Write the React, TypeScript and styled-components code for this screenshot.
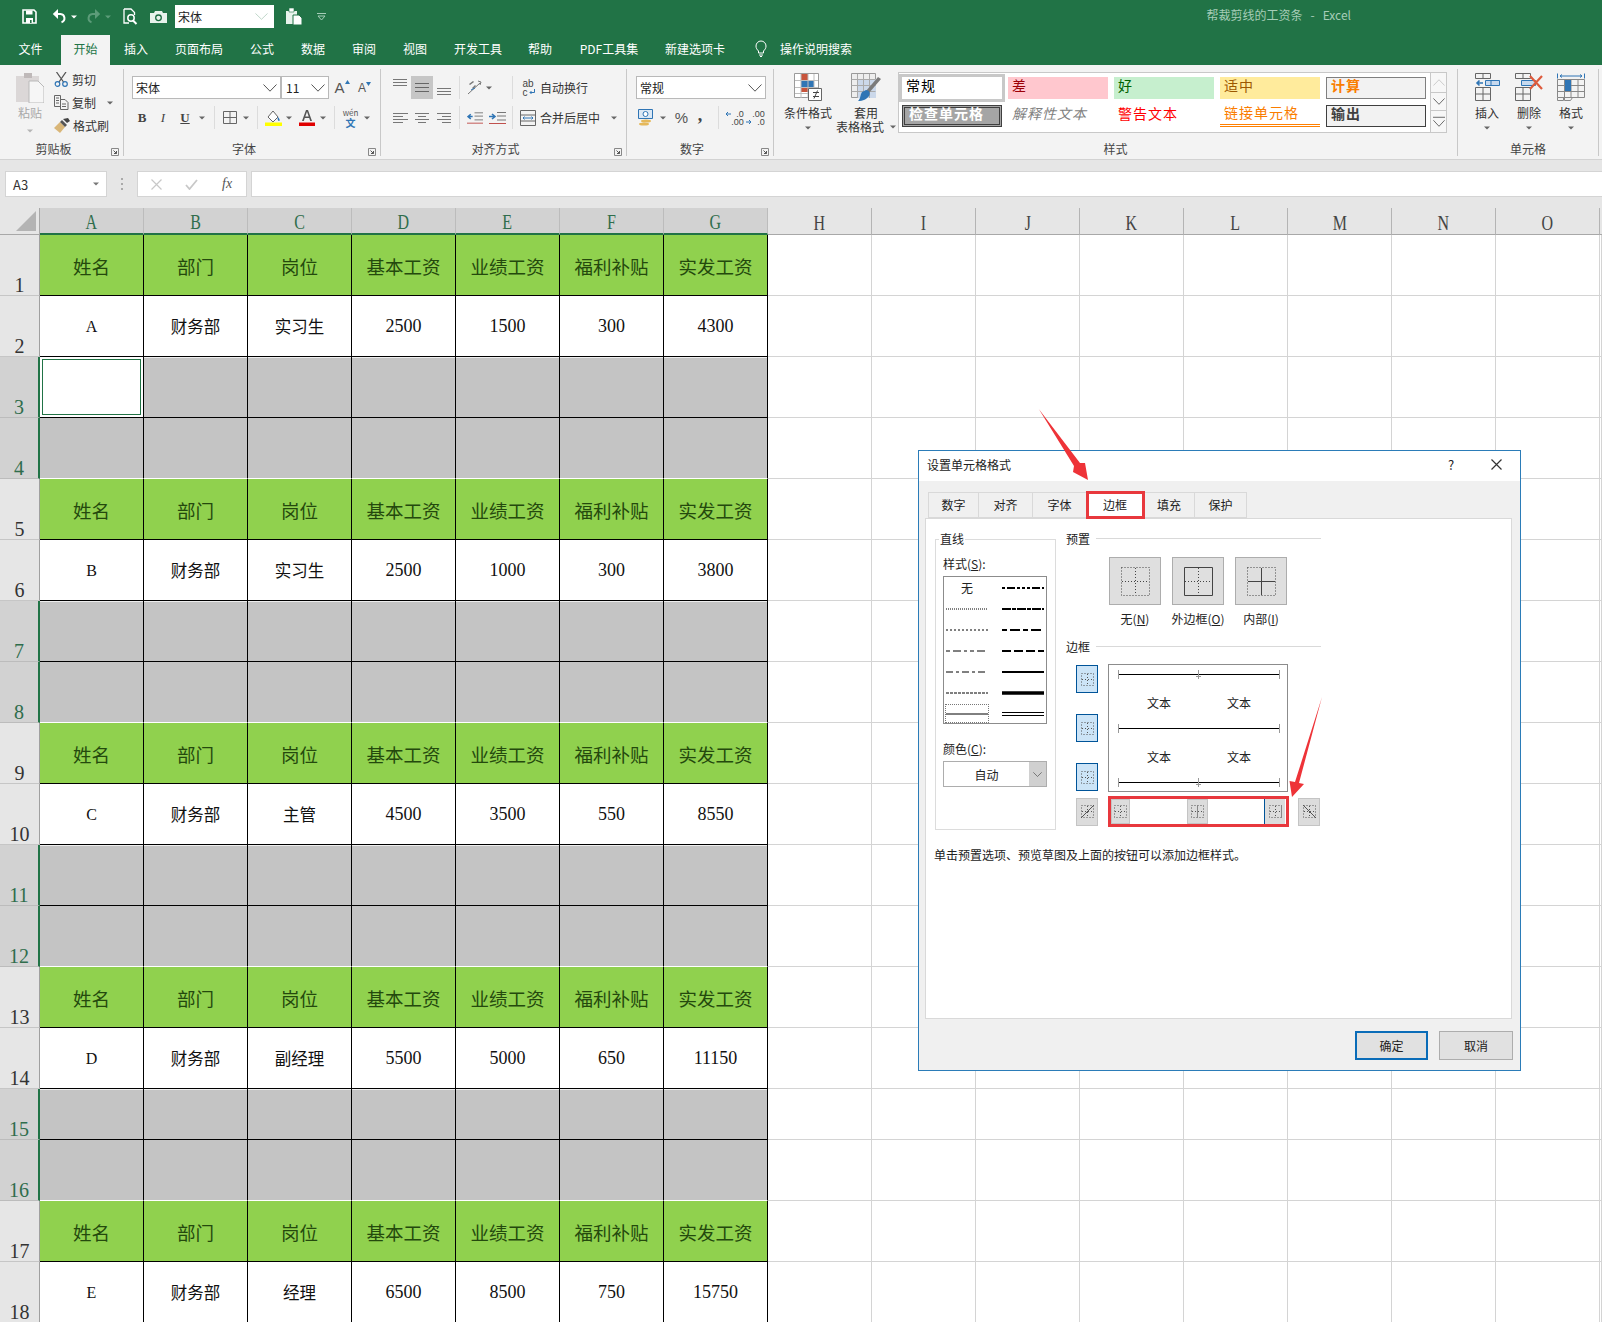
import React from "react";
import styled, { createGlobalStyle } from "styled-components";

const UI = `"Noto Sans CJK SC", "Liberation Sans", sans-serif`;
const GREEN = "#217346";

const Global = createGlobalStyle`
  html, body { margin: 0; padding: 0; background: #fff; }
  #root { width: 1602px; height: 1322px; overflow: hidden; }
  * { box-sizing: border-box; }
`;

const Page = styled.div`
  position: relative;
  width: 1602px;
  height: 1322px;
  overflow: hidden;
  display: flex;
  flex-direction: column;
  font-family: ${UI};
  font-size: 12px;
  color: #333;
`;

/* ---------- title bar ---------- */
const TitleBar = styled.header`
  height: 65px;
  flex: none;
  background: ${GREEN};
  color: #fff;
`;
const QuickRow = styled.div`
  height: 35px;
  display: flex;
  align-items: flex-start;
  padding-top: 5px;
`;
const Tool = styled.span<{ $w: number; $ml?: number }>`
  display: inline-flex;
  align-items: center;
  justify-content: center;
  flex: none;
  width: ${(p) => p.$w}px;
  margin-left: ${(p) => p.$ml ?? 0}px;
`;
const QuickSlot = styled(Tool)`
  height: 23px;
`;
const QuickFont = styled.div`
  width: 99px;
  height: 23px;
  margin-left: 8px;
  flex: none;
  display: flex;
  align-items: center;
  justify-content: space-between;
  padding: 0 6px 0 3px;
  background: #fff;
  color: #222;
`;
const DocTitle = styled.div`
  margin-left: auto;
  margin-right: 251px;
  height: 20px;
  line-height: 20px;
  color: #a6cdb8;
  white-space: pre;
`;
const TabRow = styled.nav`
  height: 30px;
  display: flex;
  align-items: stretch;
`;
const TabItem = styled.div<{ $w: number; $active?: boolean }>`
  width: ${(p) => p.$w}px;
  flex: none;
  display: flex;
  align-items: center;
  justify-content: center;
  padding-bottom: 3px;
  background: ${(p) => (p.$active ? "#f3f3f3" : "transparent")};
  color: ${(p) => (p.$active ? GREEN : "#fff")};
  white-space: nowrap;
`;
const SearchHint = styled.div`
  display: flex;
  align-items: center;
  margin-left: 19px;
  padding-bottom: 3px;
  gap: 13px;
  color: #fff;
`;

/* ---------- ribbon ---------- */
const Ribbon = styled.section`
  height: 95px;
  flex: none;
  display: flex;
  padding-top: 4px;
  background: #f3f3f3;
  border-bottom: 1px solid #d2d2d2;
`;
const Group = styled.div<{ $w: number }>`
  width: ${(p) => p.$w}px;
  height: 87px;
  flex: none;
  display: flex;
  flex-direction: column;
  border-right: 1px solid #c8c8c8;
`;
const GroupBody = styled.div`
  height: 73px;
  display: flex;
`;
const RowsBody = styled.div`
  height: 73px;
  padding-top: 7px;
  display: flex;
  flex-direction: column;
  gap: 7px;
`;
const GroupFooter = styled.div`
  height: 14px;
  display: flex;
  align-items: center;
  color: #444;
`;
const GroupName = styled.div`
  flex: 1;
  text-align: center;
  line-height: 14px;
`;
const Launcher = styled.span`
  width: 16px;
  flex: none;
  display: flex;
  justify-content: center;
  padding-top: 5px;
`;
const ToolRow = styled.div`
  height: 23px;
  display: flex;
  align-items: center;
  white-space: nowrap;
`;
const Sep = styled.span<{ $ml: number }>`
  width: 1px;
  height: 23px;
  flex: none;
  margin-left: ${(p) => p.$ml}px;
  background: #dcdcdc;
`;
const Combo = styled.div<{ $w: number; $ml?: number; $pad?: number }>`
  width: ${(p) => p.$w}px;
  margin-left: ${(p) => p.$ml ?? 0}px;
  height: 23px;
  flex: none;
  display: flex;
  align-items: center;
  justify-content: space-between;
  padding: 0 3px 0 ${(p) => p.$pad ?? 3}px;
  background: #fff;
  border: 1px solid #b9b9b9;
  color: #222;
`;
const Highlight = styled(Tool)`
  height: 23px;
  background: #c6c6c6;
`;
const ToolText = styled.span<{ $ml?: number }>`
  margin-left: ${(p) => p.$ml ?? 0}px;
  color: #333;
`;
const PasteCol = styled.div`
  flex: none;
  padding: 4px 0 0 6px;
  display: flex;
  flex-direction: column;
  align-items: center;
  width: 54px;
  color: #a9a9a9;
`;
const PasteLabel = styled.div`
  height: 20px;
  line-height: 20px;
`;
const SmallCol = styled.div`
  margin-top: -1px;
  display: flex;
  flex-direction: column;
`;
const SmallItem = styled.div`
  height: 23px;
  display: flex;
  align-items: center;
  gap: 3px;
`;
const LargeCol = styled.div<{ $w: number; $ml?: number }>`
  width: ${(p) => p.$w}px;
  margin-left: ${(p) => p.$ml ?? 0}px;
  flex: none;
  padding-top: 4px;
  display: flex;
  flex-direction: column;
  align-items: center;
  white-space: nowrap;
`;
const LargeIcon = styled.div`
  height: 31px;
  display: flex;
  align-items: flex-start;
`;
const LargeLabel = styled.div`
  height: 14px;
  line-height: 14px;
  margin-top: 2px;
  display: flex;
  align-items: center;
  gap: 6px;
`;
const SecondLabel = styled(LargeLabel)`
  margin-top: 0;
`;
const LargeCaret = styled.div`
  height: 12px;
  margin-top: 2px;
  display: flex;
  align-items: center;
`;
const Gallery = styled.div`
  width: 549px;
  height: 61px;
  margin: 3px 0 0 2px;
  display: flex;
  flex: none;
  background: #fff;
  border: 1px solid #c8c8c8;
`;
const GalleryGrid = styled.div`
  flex: 1;
  padding: 4px 0 0 3px;
  display: grid;
  grid-template-columns: repeat(5, 100px);
  grid-auto-rows: 22px;
  column-gap: 6px;
  row-gap: 6px;
`;
type Kind =
  | "normal" | "bad" | "good" | "neutral" | "calc"
  | "check" | "note" | "warn" | "link" | "output";
const kinds: Record<Kind, string> = {
  normal: "background:#fff;color:#000;box-shadow:0 0 0 3px #c8c8c8;",
  bad: "background:#ffc7ce;color:#9c0006;",
  good: "background:#c6efce;color:#006100;",
  neutral: "background:#ffeb9c;color:#9c5700;",
  calc: "background:#f2f2f2;color:#fa7d00;border:1px solid #7f7f7f;font-weight:700;",
  check: "background:#a5a5a5;color:#fff;border:3px double #3f3f3f;font-weight:700;",
  note: "color:#7f7f7f;font-style:italic;",
  warn: "color:#ff0000;",
  link: "color:#fa7d00;border-bottom:3px double #ff8001;",
  output: "background:#f2f2f2;color:#3f3f3f;border:1px solid #3f3f3f;font-weight:700;",
};
const StyleCell = styled.div<{ $k: Kind }>`
  display: flex;
  align-items: center;
  padding: 0 0 6px 4px;
  font-size: 14px;
  letter-spacing: 1px;
  line-height: 16px;
  white-space: nowrap;
  ${(p) => kinds[p.$k]}
`;
const GalleryScroll = styled.div`
  width: 16px;
  flex: none;
  display: flex;
  flex-direction: column;
  border-left: 1px solid #c8c8c8;
  background: #f7f7f7;
`;
const ScrollBtn = styled.div<{ $h: number }>`
  height: ${(p) => p.$h}px;
  display: flex;
  align-items: center;
  justify-content: center;
  border-bottom: 1px solid #c8c8c8;
  &:last-child {
    border-bottom: none;
  }
`;

/* ---------- formula bar ---------- */
const FormulaBand = styled.section`
  height: 48px;
  flex: none;
  display: flex;
  padding: 11px 0 0 5px;
  background: #e6e6e6;
`;
const NameBox = styled.div`
  width: 102px;
  height: 26px;
  display: flex;
  align-items: center;
  justify-content: space-between;
  padding: 0 7px;
  background: #fff;
  border: 1px solid #d4d4d4;
  font-size: 13px;
  color: #333;
`;
const BandDots = styled.div`
  width: 30px;
  height: 26px;
  flex: none;
  display: flex;
  align-items: center;
  justify-content: center;
`;
const FxBox = styled.div`
  width: 110px;
  height: 26px;
  flex: none;
  display: flex;
  align-items: center;
  background: #fff;
  border: 1px solid #d4d4d4;
`;
const FxLabel = styled.span`
  margin-left: 24px;
  font-family: "Liberation Serif", serif;
  font-style: italic;
  font-size: 14px;
  color: #555;
`;
const FormulaInput = styled.div`
  flex: 1;
  height: 26px;
  margin-left: 4px;
  background: #fff;
  border: 1px solid #d4d4d4;
  border-right: none;
`;

/* ---------- sheet ---------- */
const Sheet = styled.section`
  flex: 1;
  display: grid;
  grid-template-columns: 40px repeat(15, 104px) 2px;
  grid-template-rows: 27px repeat(14, 61px) 51px repeat(3, 61px);
  background: #fff;
`;
const Corner = styled.div`
  background: #e6e6e6;
  border-bottom: 1px solid #a8a8a8;
  border-right: 1px solid #a8a8a8;
  display: flex;
  align-items: center;
  justify-content: flex-end;
  padding-right: 3px;
`;
const ColHead = styled.div<{ $sel: boolean }>`
  display: flex;
  align-items: center;
  justify-content: center;
  padding-top: 4px;
  font-family: "Liberation Serif", serif;
  font-size: 20px;
  background: ${(p) => (p.$sel ? "#d2d2d2" : "#e6e6e6")};
  color: ${(p) => (p.$sel ? "#2f6d4c" : "#444")};
  border-right: 1px solid ${(p) => (p.$sel ? "#bcbcbc" : "#b4b4b4")};
  border-bottom: ${(p) => (p.$sel ? `2px solid ${GREEN}` : "1px solid #a8a8a8")};
`;
const ColLetter = styled.span`
  display: inline-block;
  transform: scaleX(0.8);
`;
const RowHead = styled.div<{ $sel: boolean }>`
  display: flex;
  align-items: flex-end;
  justify-content: center;
  font-family: "Liberation Serif", serif;
  font-size: 20px;
  line-height: 19px;
  background: ${(p) => (p.$sel ? "#d2d2d2" : "#e6e6e6")};
  color: ${(p) => (p.$sel ? "#2f6d4c" : "#333")};
  border-right: ${(p) => (p.$sel ? `2px solid ${GREEN}` : "1px solid #a0a0a0")};
  border-bottom: 1px solid ${(p) => (p.$sel ? "#bcbcbc" : "#c6c6c6")};
`;
const Cell = styled.div`
  border-right: 1px solid #d4d4d4;
  border-bottom: 1px solid #d4d4d4;
`;
const TitleCell = styled.div`
  display: flex;
  align-items: center;
  justify-content: center;
  padding-top: 1px;
  background: #90d14e;
  color: #24490d;
  font-size: 18.5px;
  white-space: nowrap;
  border-right: 1px solid #000;
  border-bottom: 1px solid #000;
`;
const DataCell = styled.div`
  display: flex;
  align-items: center;
  justify-content: center;
  padding-top: 1px;
  background: #fff;
  color: #111;
  font-family: "Liberation Serif", "Noto Sans CJK SC", serif;
  font-size: 18px;
  border-right: 1px solid #000;
  border-bottom: 1px solid #000;
`;
const CjkText = styled.span`
  font-family: ${UI};
  font-size: 16.5px;
  margin-top: -1px;
`;
const LetterText = styled.span`
  font-size: 16px;
`;
const BlankCell = styled.div<{ $first: boolean; $active?: boolean }>`
  background: ${(p) => (p.$active ? "#fff" : "#c4c4c4")};
  border-right: 1px solid #000;
  border-bottom: ${(p) => (p.$first ? "1px solid #000" : "1px solid #fff")};
  box-shadow: ${(p) =>
    p.$active
      ? `inset 0 0 0 2px #fff, inset 0 0 0 3px ${GREEN}`
      : p.$first
      ? "inset 0 1px 0 #eee"
      : "none"};
`;

/* ---------- dialog ---------- */
const Dialog = styled.div`
  position: absolute;
  left: 918px;
  top: 450px;
  width: 603px;
  height: 621px;
  display: flex;
  flex-direction: column;
  background: #f0f0f0;
  border: 1px solid #2b7cb8;
  color: #222;
`;
const DialogTitle = styled.div`
  height: 30px;
  flex: none;
  display: flex;
  align-items: center;
  padding: 0 0 3px 8px;
  background: #fff;
`;
const TitleText = styled.span`
  flex: 1;
`;
const TitleBtn = styled.span<{ $w: number }>`
  width: ${(p) => p.$w}px;
  display: flex;
  justify-content: center;
  font-size: 13px;
`;
const DialogTabs = styled.div`
  display: flex;
  flex: none;
  margin: 11px 0 0 9px;
  height: 26px;
  position: relative;
`;
const DialogTab = styled.div<{ $w: number; $active?: boolean }>`
  width: ${(p) => p.$w}px;
  display: flex;
  align-items: center;
  justify-content: center;
  padding-bottom: 1px;
  background: ${(p) => (p.$active ? "#fff" : "#f0f0f0")};
  border: 1px solid #d9d9d9;
  border-left: none;
  &:first-child {
    border-left: 1px solid #d9d9d9;
  }
  ${(p) =>
    p.$active
      ? "outline: 3px solid #e8383d; outline-offset: -2px; border-color: transparent; position: relative; z-index: 1;"
      : ""}
`;
const Panel = styled.div`
  margin: 0 0 0 6px;
  width: 587px;
  height: 501px;
  flex: none;
  background: #fff;
  border: 1px solid #d9d9d9;
  padding-left: 9px;
`;
const PanelTop = styled.div`
  display: flex;
`;
const LineGroup = styled.div`
  width: 121px;
  height: 291px;
  margin-top: 20px;
  flex: none;
  padding: 0 0 0 7px;
  border: 1px solid #dcdcdc;
`;
const GroupLegend = styled.div`
  width: fit-content;
  height: 16px;
  line-height: 16px;
  margin: -9px 0 0 -4px;
  padding: 0 1px;
  background: #fff;
`;
const FieldLabel = styled.div<{ $mt: number }>`
  margin-top: ${(p) => p.$mt}px;
  height: 16px;
  line-height: 16px;
  white-space: nowrap;
  u {
    text-underline-offset: 1px;
  }
`;
const StyleList = styled.div`
  width: 104px;
  height: 148px;
  margin-top: 4px;
  padding: 0 0 0 2px;
  display: grid;
  grid-template-columns: 42px 42px;
  grid-auto-rows: 21px;
  column-gap: 14px;
  border: 1px solid #8c8c8c;
  align-items: center;
  justify-items: center;
`;
const SelectedLine = styled.div`
  width: 42px;
  height: 17px;
  display: flex;
  align-items: center;
  outline: 1px dotted #777;
`;
const ColorSelect = styled.div`
  width: 104px;
  height: 26px;
  margin-top: 4px;
  display: flex;
  border: 1px solid #adadad;
`;
const ColorValue = styled.div`
  flex: 1;
  display: flex;
  align-items: center;
  justify-content: center;
`;
const ColorBtn = styled.div`
  width: 17px;
  display: flex;
  align-items: center;
  justify-content: center;
  background: #d0d0d0;
`;
const RightCol = styled.div`
  width: 255px;
  margin: 10px 0 0 10px;
  flex: none;
`;
const SectionTitle = styled.div<{ $mt?: number }>`
  height: 18px;
  margin-top: ${(p) => p.$mt ?? 0}px;
  display: flex;
  align-items: center;
  gap: 6px;
  &::after {
    content: "";
    flex: 1;
    height: 1px;
    background: #d9d9d9;
  }
`;
const PresetRow = styled.div`
  display: flex;
  gap: 11px;
  margin: 10px 0 0 43px;
`;
const PresetItem = styled.div`
  width: 52px;
  display: flex;
  flex-direction: column;
  align-items: center;
  white-space: nowrap;
`;
const PresetBtn = styled.div`
  width: 52px;
  height: 48px;
  display: flex;
  align-items: center;
  justify-content: center;
  background: #dfdfdf;
  border: 1px solid #adadad;
`;
const PresetLabel = styled.div`
  margin-top: 6px;
  line-height: 16px;
  u {
    text-underline-offset: 1px;
  }
`;
const Editor = styled.div`
  margin: 9px 0 0 10px;
  display: grid;
  grid-template-columns: 22px 180px 22px;
  grid-template-rows: 128px 31px;
  column-gap: 10px;
  row-gap: 4px;
  align-items: center;
`;
const SideBtns = styled.div`
  height: 128px;
  padding: 1px 0;
  display: flex;
  flex-direction: column;
  justify-content: space-between;
`;
const BorderBtn = styled.div<{ $on?: boolean; $h?: number; $w?: number }>`
  width: ${(p) => p.$w ?? 22}px;
  height: ${(p) => p.$h ?? 28}px;
  display: flex;
  align-items: center;
  justify-content: center;
  background: ${(p) => (p.$on ? "#cce4f7" : "#dcdcdc")};
  border: 1px solid ${(p) => (p.$on ? "#005499" : "#c4c4c4")};
`;
const LastBtn = styled(BorderBtn)`
  border: none;
  border-left: 1px solid #005499;
`;
const Preview = styled.div`
  position: relative;
  width: 180px;
  height: 128px;
  padding: 10px 0 0 10px;
  display: grid;
  grid-template-columns: 80px 80px;
  grid-template-rows: 54px 54px;
  background: #fff;
  border: 1px solid #8c8c8c;
`;
const PreviewArt = styled.svg`
  position: absolute;
  left: -1px;
  top: -1px;
`;
const PreviewText = styled.div`
  display: flex;
  align-items: center;
  justify-content: center;
`;
const PreviewTextLow = styled(PreviewText)`
  padding-top: 1px;
`;
const RedBox = styled.div`
  width: 181px;
  height: 31px;
  display: flex;
  align-items: center;
  justify-content: space-between;
  padding: 0 1px 0 0;
  border: 3px solid #e8383d;
`;
const Description = styled.div`
  margin: 16px 0 0 -1px;
  line-height: 18px;
`;
const DialogFooter = styled.div`
  flex: 1;
  display: flex;
  justify-content: flex-end;
  gap: 11px;
  padding: 12px 7px 0 0;
`;
const DialogBtn = styled.div<{ $default?: boolean; $w: number }>`
  width: ${(p) => p.$w}px;
  height: 29px;
  display: flex;
  align-items: center;
  justify-content: center;
  background: #e1e1e1;
  border: ${(p) => (p.$default ? "2px solid #0a6cb8" : "1px solid #adadad")};
`;
const Overlay = styled.svg`
  position: absolute;
  left: 0;
  top: 0;
  pointer-events: none;
`;

/* ---------- icons ---------- */
const Caret = ({ c = "#666" }: { c?: string }) => (
  <svg width="6" height="4" viewBox="0 0 6 4"><path d="M0 .5h6L3 3.5z" fill={c} /></svg>
);
const Chevron = ({ w = 14, h = 8, c = "#555" }: { w?: number; h?: number; c?: string }) => (
  <svg width={w} height={h} viewBox="0 0 14 8" preserveAspectRatio="none" fill="none">
    <path d="M.5.5 7 7.2 13.5.5" stroke={c} />
  </svg>
);
const LauncherIcon = () => (
  <svg width="8" height="8" viewBox="0 0 8 8" fill="none">
    <path d="M.5 7.5V.5h7v7z" stroke="#888" />
    <path d="M2.5 2.5l3 3M5.5 3v2.5H3" stroke="#555" />
  </svg>
);
const SaveIcon = () => (
  <svg width="15" height="15" viewBox="0 0 15 15" fill="none">
    <path d="M1 1h11l2 2v11H1z" stroke="#fff" strokeWidth="1.6" />
    <path d="M4 1.5h6.5v4H4zM4 9h7v5H4z" fill="#fff" />
    <path d="M8 11h1.6v3H8z" fill={GREEN} />
  </svg>
);
const UndoIcon = ({ c = "#fff" }: { c?: string }) => (
  <svg width="14" height="15" viewBox="0 0 14 15" fill="none">
    <path d="M3 5h5.5a4.2 4.2 0 0 1 1 8.2" stroke={c} strokeWidth="2" />
    <path d="M6 0 .8 5 6 10z" fill={c} />
  </svg>
);
const RedoIcon = ({ c }: { c: string }) => (
  <svg width="14" height="15" viewBox="0 0 14 15" fill="none">
    <path d="M11 5H5.5a4.2 4.2 0 0 0-1 8.2" stroke={c} strokeWidth="2" />
    <path d="M8 0l5.2 5L8 10z" fill={c} />
  </svg>
);
const PreviewIcon = () => (
  <svg width="15" height="17" viewBox="0 0 15 17" fill="none">
    <path d="M1 1h7l3.5 3.5V7M1 1v14h5" stroke="#fff" strokeWidth="1.3" />
    <circle cx="8" cy="10" r="3.2" stroke="#fff" strokeWidth="1.5" />
    <path d="M10 12.5l3.5 3.5" stroke="#fff" strokeWidth="2" />
  </svg>
);
const CameraIcon = () => (
  <svg width="17" height="12" viewBox="0 0 17 12">
    <path d="M0 2h4l1-2h7l1 2h4v10H0z" fill="#e8f3ec" />
    <circle cx="8.5" cy="6.8" r="2.8" fill="none" stroke="#1c6b41" strokeWidth="1.3" />
  </svg>
);
const ClipIcon = () => (
  <svg width="16" height="17" viewBox="0 0 16 17">
    <path d="M0 3h11v13H0z" fill="#e8f3ec" />
    <path d="M3 0h5v4H3z" fill="#fff" stroke={GREEN} strokeWidth=".6" />
    <path d="M7 7h6l3 3v7H7z" fill="#fff" stroke={GREEN} />
  </svg>
);
const QatMore = () => (
  <svg width="9" height="8" viewBox="0 0 9 8" fill="none">
    <path d="M0 .5h9" stroke="#a6cdb8" />
    <path d="M1 3h7L4.5 7z" stroke="#a6cdb8" />
  </svg>
);
const BulbIcon = () => (
  <svg width="12" height="17" viewBox="0 0 12 17" fill="none">
    <path d="M3.5 11C2 9.5 1 8.3 1 6a5 5 0 0 1 10 0c0 2.300-1 3.500-2.500 5v2h-5z" stroke="#fff" />
    <path d="M4 15h4M5 16.500h2" stroke="#fff" />
  </svg>
);
const PasteIcon = () => (
  <svg width="28" height="30" viewBox="0 0 28 30">
    <path d="M0 3h23v26H0z" fill="#dbd7d7" />
    <path d="M8 0h8v5H8z" fill="#bfb9b9" />
    <path d="M13 8h9l6 6v16H13z" fill="#f6f6f6" stroke="#b9b9b9" />
  </svg>
);
const ScissorsIcon = () => (
  <svg width="15" height="15" viewBox="0 0 15 15" fill="none">
    <path d="M2.500 0l7 10M12 0 5 10" stroke="#555" strokeWidth="1.3" />
    <circle cx="3.5" cy="12" r="2.3" stroke="#2f75b5" strokeWidth="1.2" />
    <circle cx="11" cy="12" r="2.3" stroke="#2f75b5" strokeWidth="1.2" />
  </svg>
);
const CopyIcon = () => (
  <svg width="15" height="15" viewBox="0 0 15 15" fill="none" stroke="#666">
    <path d="M.5.500h6v11h-6zM2 3h3M2 5.500h3M2 8h3" />
    <path d="M6.500 4.500H11l3 3v7H6.500z" fill="#f3f3f3" />
    <path d="M8 9h4M8 11.500h4" />
  </svg>
);
const BrushIcon = () => (
  <svg width="16" height="15" viewBox="0 0 16 15">
    <path d="M0 10 6 4l5 5-5 6z" fill="#d9b678" />
    <path d="M6 4l2-2 5 5-2 2z" fill="#555" />
    <path d="M9 1l5-1 2 3-3 2z" fill="#444" />
  </svg>
);
const BoldGlyph = styled.span`
  font: 700 13px "Liberation Serif", serif;
  color: #444;
`;
const ItalicGlyph = styled(BoldGlyph)`
  font-style: italic;
  font-weight: 400;
`;
const UnderGlyph = styled(BoldGlyph)`
  text-decoration: underline;
`;
const CommaGlyph = styled(BoldGlyph)`
  font-size: 18px;
  line-height: 16px;
  margin-top: -6px;
`;
const BigA = styled.span<{ $s: number }>`
  font: 400 ${(p) => p.$s}px "Liberation Sans", sans-serif;
  color: #555;
  line-height: 1;
`;
const GrowIcon = ({ up }: { up: boolean }) => (
  <svg width="5" height="4" viewBox="0 0 5 4">
    <path d={up ? "M0 4 2.5 0 5 4z" : "M0 0h5L2.5 4z"} fill="#2f75b5" />
  </svg>
);
const GrowWrap = styled.span`
  display: inline-flex;
  align-items: flex-start;
  gap: 0;
`;
const GridIcon = () => (
  <svg width="14" height="13" viewBox="0 0 14 13" fill="none" stroke="#666">
    <path d="M.5.500h13v12H.5zM7 .5v12M.5 6.500h13" />
  </svg>
);
const FillIcon = () => (
  <svg width="17" height="16" viewBox="0 0 17 16">
    <path d="M3 7 8 1l5 6-5 5z" fill="#fff" stroke="#666" />
    <path d="M13 7c2 2 2 4 1 4s-2-2-1-4z" fill="#2f75b5" />
    <path d="M0 12.500h17V16H0z" fill="#ffff00" />
  </svg>
);
const FontColorIcon = () => (
  <svg width="16" height="16" viewBox="0 0 16 16">
    <path d="M7 0h2l4 11h-1.800l-1-3H5.800l-1 3H3zm-.7 6.500h3.400L8 1.800z" fill="#555" />
    <path d="M0 12.500h16V16H0z" fill="#e00000" />
  </svg>
);
const WenWrap = styled.span`
  display: flex;
  flex-direction: column;
  align-items: center;
  gap: 1px;
`;
const WenTop = styled.span`
  font-size: 8px;
  line-height: 9px;
  height: 9px;
  color: #555;
`;
const WenChar = styled.span`
  color: #2f75b5;
  font-size: 10px;
  line-height: 10px;
  height: 10px;
  font-weight: 700;
`;
const Bars = ({ w, h, lines, c = "#777" }: { w: number; h: number; lines: [number, number, number][]; c?: string }) => (
  <svg width={w} height={h} viewBox={`0 0 ${w} ${h}`} fill="none" stroke={c}>
    {lines.map(([x1, x2, y], i) => (
      <path key={i} d={`M${x1} ${y + 0.5}H${x2}`} />
    ))}
  </svg>
);
const OrientIcon = () => (
  <svg width="16" height="15" viewBox="0 0 16 15" fill="none">
    <path d="M1 14 13 3" stroke="#777" strokeWidth="1" />
    <path d="M11 1l3 1-1 3" stroke="#777" />
    <path d="M2 4l4-3 1 1-4 3zM5 8l3-3 1 1-3 3z" fill="#777" />
    <path d="M4 10l4-2" stroke="#2f75b5" />
  </svg>
);
const IndentIcon = ({ flip }: { flip?: boolean }) => (
  <svg width="17" height="14" viewBox="0 0 17 14" fill="none">
    {flip ? (
      <>
        <path d="M8 1.500h9M8 5h9M8 9h9" stroke="#777" />
        <path d="M0 5.500h5M3 3l3 2.500L3 8" stroke="#2f75b5" strokeWidth="1.6" />
        <path d="M0 12.500h17" stroke="#c0504d" />
      </>
    ) : (
      <>
        <path d="M8 1.500h9M8 5h9M8 9h9" stroke="#777" />
        <path d="M1 5.500h5M4 3 1 5.500 4 8" stroke="#2f75b5" strokeWidth="1.6" />
        <path d="M0 12.500h17" stroke="#c0504d" />
      </>
    )}
  </svg>
);
const WrapWrap = styled.span`
  display: flex;
  flex-direction: column;
  font: 400 10px/9px "Liberation Sans", sans-serif;
  color: #444;
`;
const WrapLine = styled.span`
  display: flex;
  align-items: center;
  gap: 1px;
  height: 9px;
`;
const WrapArrow = () => (
  <svg width="6" height="7" viewBox="0 0 6 7" fill="none">
    <path d="M5.500 0v3.500H1M2.500 2 1 3.500 2.500 5" stroke="#2f75b5" />
  </svg>
);
const MergeIcon = () => (
  <svg width="16" height="16" viewBox="0 0 16 16" fill="none">
    <path d="M.5.500h15v15H.5zM.5 5h15M.5 11h15" stroke="#666" />
    <path d="M3 8h10M4.500 6.500 3 8l1.500 1.500M11.500 6.500 13 8l-1.500 1.500" stroke="#2f75b5" />
  </svg>
);
const CurrencyIcon = () => (
  <svg width="17" height="18" viewBox="0 0 17 18">
    <path d="M.5.500h14v9H.5z" fill="#dbe8f5" stroke="#2f75b5" />
    <circle cx="7.5" cy="5" r="2.5" fill="#fff" stroke="#2f75b5" />
    <ellipse cx="8" cy="12" rx="5" ry="1.5" fill="#e5b85a" />
    <ellipse cx="6" cy="15" rx="5" ry="1.5" fill="#e5b85a" />
  </svg>
);
const DecWrap = styled.span`
  display: grid;
  grid-template-columns: 6px auto;
  grid-auto-rows: 8px;
  align-items: center;
  justify-items: end;
  font: 400 9px/8px "Liberation Sans", sans-serif;
  color: #444;
`;
const DecArrow = ({ left }: { left?: boolean }) => (
  <svg width="6" height="6" viewBox="0 0 6 6" fill="none">
    <path d={left ? "M6 3H1M3 1 1 3l2 2" : "M0 3h5M3 1l2 2-2 2"} stroke="#2f75b5" />
  </svg>
);
const CondIcon = () => (
  <svg width="28" height="28" viewBox="0 0 28 28">
    <path d="M.5.500h24v24H.5z" fill="#fff" stroke="#9a9a9a" />
    <path d="M7 1h7v6H7z" fill="#c8553c" />
    <path d="M7 8h13v6H7z" fill="#2f75b5" />
    <path d="M7 15h7v4H7z" fill="#c8553c" />
    <path d="M1 7.500h23M1 14.500h23M1 20.500h23M7 1v24M14 1v24M20 1v24" stroke="#bdbdbd" fill="none" />
    <path d="M14.500 15.500h13v12h-13z" fill="#fff" stroke="#666" />
    <path d="M19 19.500h6M19 23.500h6M23.500 17.500l-3.500 8" stroke="#444" />
  </svg>
);
const TableIcon = () => (
  <svg width="30" height="29" viewBox="0 0 30 29">
    <path d="M.5.500h24v24H.5z" fill="#eee" stroke="#9a9a9a" />
    <path d="M6 6h19v19H6z" fill="#cbd8ea" />
    <path d="M.5 6.500h24M.5 12.500h24M.5 18.500h24M6.500 1v24M12.500 1v24M18.500 1v24" stroke="#aaa" fill="none" />
    <path d="M27 4l3 2-12 14-3-2z" fill="#7b7b7b" />
    <path d="M15 17c3 0 5 3 3 6s-6 5-11 5c3-3 2-6 4-9z" fill="#2f75b5" />
  </svg>
);
const CellsInsertIcon = () => (
  <svg width="26" height="28" viewBox="0 0 26 28" fill="none">
    <path d="M1.500.500h15v5h-15zM9 .5v5M1.500 14.500h15v13h-15zM1.500 21h15M9 14.500v13" stroke="#666" />
    <path d="M11.500 7.500h14v5h-14zM17 7.500v5" stroke="#2f75b5" fill="#c7d9ee" />
    <path d="M9 10H3M5.500 7.500 3 10l2.500 2.500" stroke="#2f75b5" strokeWidth="1.6" />
  </svg>
);
const CellsDeleteIcon = () => (
  <svg width="29" height="28" viewBox="0 0 29 28" fill="none">
    <path d="M.5.500h15v5H.5zM8 .5v5M.5 14.500h15v13H.5zM.5 21h15M8 14.500v13" stroke="#666" />
    <path d="M6.500 7.500h14v5h-14z" stroke="#2f75b5" fill="#c7d9ee" />
    <path d="M15 3l12 13M27 3 15 16" stroke="#dd5a3c" strokeWidth="2.2" />
  </svg>
);
const CellsFormatIcon = () => (
  <svg width="28" height="28" viewBox="0 0 28 28" fill="none">
    <path d="M.5.500v5M27.500.500v5M3 3h22M3 3l2-1.500M3 3l2 1.500M25 3l-2-1.500M25 3l-2 1.500" stroke="#2f75b5" />
    <path d="M.5 6.500h27v18H.5zM7.500 6.500v18M14 6.500v18M21 6.500v18M.5 12.500h27M.5 18.500h27" stroke="#888" />
    <path d="M8 7h6v11H8z" fill="#2f75b5" />
    <path d="M.5 24.500v3h6v-3M7.500 24.500v3h6l2-3" stroke="#888" />
  </svg>
);
const XIcon = ({ c, s = 11 }: { c: string; s?: number }) => (
  <svg width={s} height={s} viewBox="0 0 11 11" fill="none">
    <path d="M.5.500l10 10M10.500.500l-10 10" stroke={c} strokeWidth="1.2" />
  </svg>
);
const CheckIcon = () => (
  <svg width="13" height="11" viewBox="0 0 13 11" fill="none">
    <path d="M1 6l3.500 4L12 1" stroke="#c8c8c8" strokeWidth="1.8" />
  </svg>
);
const DotsIcon = () => (
  <svg width="3" height="12" viewBox="0 0 3 12" fill="#aaa">
    <path d="M0 0h2v2H0zM0 5h2v2H0zM0 10h2v2H0z" />
  </svg>
);
const CornerMark = () => (
  <svg width="20" height="20" viewBox="0 0 20 20"><path d="M20 0v20H0z" fill="#b4b4b4" /></svg>
);
const LineSample = ({ w = 1, d, double }: { w?: number; d?: string; double?: boolean }) => (
  <svg width="42" height="10" viewBox="0 0 42 10" fill="none" stroke="#000">
    {double ? (
      <path d="M0 3.500h42M0 6.500h42" />
    ) : (
      <path d="M0 5h42" strokeWidth={w} strokeDasharray={d} />
    )}
  </svg>
);
const PresetIcon = ({ outer, inner }: { outer?: boolean; inner?: boolean }) => (
  <svg width="29" height="29" viewBox="0 0 29 29" fill="none">
    <path d="M.5.500h28v28H.5z" stroke="#444" strokeDasharray={outer ? undefined : "1 2"} />
    <path d="M14.500 1v27M1 14.500h27" stroke="#444" strokeDasharray={inner ? undefined : "1 2"} />
  </svg>
);
const SmallGrid = ({ solid }: { solid?: "center" | "right" | "diagUp" | "diagDown" }) => (
  <svg width="13" height="13" viewBox="0 0 13 13" fill="none">
    <path d="M.5.500h12v12H.5zM6.500 1v11M1 6.500h11" stroke="#555" strokeDasharray="1 2" />
    {solid === "center" && <path d="M6.500 0v13" stroke="#888" />}
    {solid === "right" && <path d="M12.500 0v13" stroke="#888" />}
    {solid === "diagUp" && <path d="M0 13 13 0" stroke="#555" />}
    {solid === "diagDown" && <path d="M0 0l13 13" stroke="#555" />}
  </svg>
);
const PreviewLines = () => (
  <PreviewArt width="180" height="128" viewBox="0 0 180 128" fill="none">
    {[10, 64, 118].map((y) => (
      <g key={y}>
        <path d={`M10 ${y + 0.5}H171`} stroke="#000" />
        <path d={`M10.500 ${y - 4}v9M171.500 ${y - 4}v9`} stroke="#999" />
        {y !== 64 && <path d={`M90.500 ${y - 4}v9M88 ${y + 2.5}h5`} stroke="#999" />}
      </g>
    ))}
  </PreviewArt>
);

/* ---------- data ---------- */
const COLS = "ABCDEFGHIJKLMNO".split("");
const TITLES = ["姓名", "部门", "岗位", "基本工资", "业绩工资", "福利补贴", "实发工资"];
const PEOPLE = [
  ["A", "财务部", "实习生", "2500", "1500", "300", "4300"],
  ["B", "财务部", "实习生", "2500", "1000", "300", "3800"],
  ["C", "财务部", "主管", "4500", "3500", "550", "8550"],
  ["D", "财务部", "副经理", "5500", "5000", "650", "11150"],
  ["E", "财务部", "经理", "6500", "8500", "750", "15750"],
];
const isCjk = (s: string) => /[^\x00-\x7f]/.test(s);
const isLetter = (s: string) => /^[A-Z]$/.test(s);

const CellsFor = ({ row }: { row: number }) => {
  const phase = (row - 1) % 4;
  const person = PEOPLE[Math.floor((row - 1) / 4)];
  return (
    <>
      {TITLES.map((t, i) => {
        if (phase === 0) return <TitleCell key={i}>{t}</TitleCell>;
        if (phase === 1) {
          const v = person[i];
          return (
            <DataCell key={i}>
              {isCjk(v) ? <CjkText>{v}</CjkText> : isLetter(v) ? <LetterText>{v}</LetterText> : v}
            </DataCell>
          );
        }
        return <BlankCell key={i} $first={phase === 2} $active={row === 3 && i === 0} />;
      })}
      {Array.from({ length: 9 }, (_, i) => (
        <Cell key={"e" + i} />
      ))}
    </>
  );
};

const TOP_TABS: [string, number][] = [
  ["文件", 61], ["开始", 49], ["插入", 52], ["页面布局", 74], ["公式", 52], ["数据", 50],
  ["审阅", 52], ["视图", 50], ["开发工具", 76], ["帮助", 48], ["PDF工具集", 90], ["新建选项卡", 82],
];
const D_TABS: [string, number][] = [["数字", 51], ["对齐", 54], ["字体", 54], ["边框", 57], ["填充", 51], ["保护", 52]];

export default function App() {
  return (
    <Page>
      <Global />
      <TitleBar>
        <QuickRow>
          <QuickSlot $w={15} $ml={22}><SaveIcon /></QuickSlot>
          <QuickSlot $w={14} $ml={15}><UndoIcon /></QuickSlot>
          <QuickSlot $w={6} $ml={5}><Caret c="#fff" /></QuickSlot>
          <QuickSlot $w={14} $ml={10}><RedoIcon c="#5c9c79" /></QuickSlot>
          <QuickSlot $w={6} $ml={4}><Caret c="#5c9c79" /></QuickSlot>
          <QuickSlot $w={15} $ml={12}><PreviewIcon /></QuickSlot>
          <QuickSlot $w={17} $ml={12}><CameraIcon /></QuickSlot>
          <QuickFont>
            <span>宋体</span>
            <Chevron w={13} h={7} c="#b9d3c4" />
          </QuickFont>
          <QuickSlot $w={16} $ml={12}><ClipIcon /></QuickSlot>
          <QuickSlot $w={9} $ml={15}><QatMore /></QuickSlot>
          <DocTitle>帮裁剪线的工资条   -   Excel</DocTitle>
        </QuickRow>
        <TabRow>
          {TOP_TABS.map(([t, w], i) => (
            <TabItem key={t} $w={w} $active={i === 1}>{t}</TabItem>
          ))}
          <SearchHint>
            <BulbIcon />
            <span>操作说明搜索</span>
          </SearchHint>
        </TabRow>
      </TitleBar>

      <Ribbon>
        <Group $w={124}>
          <GroupBody>
            <PasteCol>
              <PasteIcon />
              <PasteLabel>粘贴</PasteLabel>
              <LargeCaret><Caret c="#b5b5b5" /></LargeCaret>
            </PasteCol>
            <SmallCol>
              <SmallItem><ScissorsIcon /><ToolText>剪切</ToolText></SmallItem>
              <SmallItem><CopyIcon /><ToolText>复制</ToolText><Tool $w={6} $ml={8}><Caret /></Tool></SmallItem>
              <SmallItem><BrushIcon /><ToolText>格式刷</ToolText></SmallItem>
            </SmallCol>
          </GroupBody>
          <GroupFooter><GroupName>剪贴板</GroupName><Launcher><LauncherIcon /></Launcher></GroupFooter>
        </Group>

        <Group $w={257}>
          <RowsBody>
            <ToolRow>
              <Combo $w={149} $ml={8}><span>宋体</span><Chevron /></Combo>
              <Combo $w={48} $pad={4}><span>11</span><Chevron /></Combo>
              <Tool $w={14} $ml={6}><GrowWrap><BigA $s={15}>A</BigA><GrowIcon up /></GrowWrap></Tool>
              <Tool $w={13} $ml={9}><GrowWrap><BigA $s={12}>A</BigA><GrowIcon up={false} /></GrowWrap></Tool>
            </ToolRow>
            <ToolRow>
              <Tool $w={20} $ml={8}><BoldGlyph>B</BoldGlyph></Tool>
              <Tool $w={22}><ItalicGlyph>I</ItalicGlyph></Tool>
              <Tool $w={22}><UnderGlyph>U</UnderGlyph></Tool>
              <Tool $w={12}><Caret /></Tool>
              <Sep $ml={6} />
              <Tool $w={26} $ml={2}><GridIcon /></Tool>
              <Tool $w={6}><Caret /></Tool>
              <Sep $ml={8} />
              <Tool $w={18} $ml={6}><FillIcon /></Tool>
              <Tool $w={6} $ml={4}><Caret /></Tool>
              <Tool $w={16} $ml={7}><FontColorIcon /></Tool>
              <Tool $w={6} $ml={5}><Caret /></Tool>
              <Sep $ml={8} />
              <Tool $w={15} $ml={8}><WenWrap><WenTop>wén</WenTop><WenChar>文</WenChar></WenWrap></Tool>
              <Tool $w={6} $ml={6}><Caret /></Tool>
            </ToolRow>
          </RowsBody>
          <GroupFooter><GroupName>字体</GroupName><Launcher><LauncherIcon /></Launcher></GroupFooter>
        </Group>

        <Group $w={246}>
          <RowsBody>
            <ToolRow>
              <Tool $w={14} $ml={12}><Bars w={14} h={23} lines={[[0, 14, 3], [0, 14, 6], [0, 14, 9]]} /></Tool>
              <Highlight $w={22} $ml={4}><Bars w={14} h={11} lines={[[0, 14, 1], [0, 14, 5], [0, 14, 9]]} c="#666" /></Highlight>
              <Tool $w={14} $ml={4}><Bars w={14} h={23} lines={[[0, 14, 12], [0, 14, 15], [0, 14, 18]]} /></Tool>
              <Sep $ml={8} />
              <Tool $w={16} $ml={7}><OrientIcon /></Tool>
              <Tool $w={6} $ml={3}><Caret /></Tool>
              <Sep $ml={20} />
              <Tool $w={13} $ml={9}>
                <WrapWrap>
                  <WrapLine>ab</WrapLine>
                  <WrapLine>c<WrapArrow /></WrapLine>
                </WrapWrap>
              </Tool>
              <ToolText $ml={5}>自动换行</ToolText>
            </ToolRow>
            <ToolRow>
              <Tool $w={15} $ml={12}><Bars w={15} h={12} lines={[[0, 15, 1], [0, 10, 4], [0, 15, 7], [0, 10, 10]]} /></Tool>
              <Tool $w={14} $ml={7}><Bars w={14} h={12} lines={[[0, 14, 1], [3, 11, 4], [0, 14, 7], [3, 11, 10]]} /></Tool>
              <Tool $w={14} $ml={8}><Bars w={14} h={12} lines={[[0, 14, 1], [5, 14, 4], [0, 14, 7], [5, 14, 10]]} /></Tool>
              <Sep $ml={8} />
              <Tool $w={16} $ml={7}><IndentIcon /></Tool>
              <Tool $w={17} $ml={6}><IndentIcon flip /></Tool>
              <Sep $ml={6} />
              <Tool $w={16} $ml={7}><MergeIcon /></Tool>
              <ToolText $ml={4}>合并后居中</ToolText>
              <Tool $w={6} $ml={11}><Caret /></Tool>
            </ToolRow>
          </RowsBody>
          <GroupFooter><GroupName>对齐方式</GroupName><Launcher><LauncherIcon /></Launcher></GroupFooter>
        </Group>

        <Group $w={147}>
          <RowsBody>
            <ToolRow>
              <Combo $w={130} $ml={9}><span>常规</span><Chevron /></Combo>
            </ToolRow>
            <ToolRow>
              <Tool $w={17} $ml={11}><CurrencyIcon /></Tool>
              <Tool $w={6} $ml={5}><Caret /></Tool>
              <Tool $w={13} $ml={9}><BigA $s={15}>%</BigA></Tool>
              <Tool $w={4} $ml={10}><CommaGlyph>,</CommaGlyph></Tool>
              <Sep $ml={16} />
              <Tool $w={15} $ml={8}>
                <DecWrap><DecArrow left /><span>.0</span><span /><span>.00</span></DecWrap>
              </Tool>
              <Tool $w={15} $ml={6}>
                <DecWrap><span /><span>.00</span><DecArrow /><span>.0</span></DecWrap>
              </Tool>
            </ToolRow>
          </RowsBody>
          <GroupFooter><GroupName>数字</GroupName><Launcher><LauncherIcon /></Launcher></GroupFooter>
        </Group>

        <Group $w={684}>
          <GroupBody>
            <LargeCol $w={48} $ml={10}>
              <LargeIcon><CondIcon /></LargeIcon>
              <LargeLabel>条件格式</LargeLabel>
              <LargeCaret><Caret /></LargeCaret>
            </LargeCol>
            <LargeCol $w={60} $ml={4}>
              <LargeIcon><TableIcon /></LargeIcon>
              <LargeLabel>套用</LargeLabel>
              <SecondLabel>表格格式<Caret /></SecondLabel>
            </LargeCol>
            <Gallery>
              <GalleryGrid>
                <StyleCell $k="normal">常规</StyleCell>
                <StyleCell $k="bad">差</StyleCell>
                <StyleCell $k="good">好</StyleCell>
                <StyleCell $k="neutral">适中</StyleCell>
                <StyleCell $k="calc">计算</StyleCell>
                <StyleCell $k="check">检查单元格</StyleCell>
                <StyleCell $k="note">解释性文本</StyleCell>
                <StyleCell $k="warn">警告文本</StyleCell>
                <StyleCell $k="link">链接单元格</StyleCell>
                <StyleCell $k="output">输出</StyleCell>
              </GalleryGrid>
              <GalleryScroll>
                <ScrollBtn $h={20}><svg width="12" height="7" viewBox="0 0 14 8" fill="none"><path d="M.5 7.500 7 .8l6.500 6.700" stroke="#c4c4c4" /></svg></ScrollBtn>
                <ScrollBtn $h={18}><Chevron w={12} h={7} /></ScrollBtn>
                <ScrollBtn $h={21}>
                  <svg width="12" height="12" viewBox="0 0 14 14" fill="none" stroke="#555"><path d="M0 1.500h14M.5 5 7 12l6.500-7" /></svg>
                </ScrollBtn>
              </GalleryScroll>
            </Gallery>
          </GroupBody>
          <GroupFooter><GroupName>样式</GroupName></GroupFooter>
        </Group>

        <Group $w={141}>
          <GroupBody>
            <LargeCol $w={42} $ml={8}><LargeIcon><CellsInsertIcon /></LargeIcon><LargeLabel>插入</LargeLabel><LargeCaret><Caret /></LargeCaret></LargeCol>
            <LargeCol $w={42}><LargeIcon><CellsDeleteIcon /></LargeIcon><LargeLabel>删除</LargeLabel><LargeCaret><Caret /></LargeCaret></LargeCol>
            <LargeCol $w={42}><LargeIcon><CellsFormatIcon /></LargeIcon><LargeLabel>格式</LargeLabel><LargeCaret><Caret /></LargeCaret></LargeCol>
          </GroupBody>
          <GroupFooter><GroupName>单元格</GroupName></GroupFooter>
        </Group>
      </Ribbon>

      <FormulaBand>
        <NameBox><span>A3</span><Caret c="#777" /></NameBox>
        <BandDots><DotsIcon /></BandDots>
        <FxBox>
          <Tool $w={11} $ml={13}><XIcon c="#c8c8c8" /></Tool>
          <Tool $w={13} $ml={23}><CheckIcon /></Tool>
          <FxLabel>fx</FxLabel>
        </FxBox>
        <FormulaInput />
      </FormulaBand>

      <Sheet>
        <Corner><CornerMark /></Corner>
        {COLS.map((c, i) => (
          <ColHead key={c} $sel={i < 7}><ColLetter>{c}</ColLetter></ColHead>
        ))}
        <Corner />
        {Array.from({ length: 18 }, (_, k) => {
          const row = k + 1;
          return (
            <React.Fragment key={row}>
              <RowHead $sel={(row - 1) % 4 >= 2}>{row}</RowHead>
              <CellsFor row={row} />
            </React.Fragment>
          );
        })}
      </Sheet>

      <Dialog>
        <DialogTitle>
          <TitleText>设置单元格格式</TitleText>
          <TitleBtn $w={42}>?</TitleBtn>
          <TitleBtn $w={48}><XIcon c="#333" s={11} /></TitleBtn>
        </DialogTitle>
        <DialogTabs>
          {D_TABS.map(([t, w]) => (
            <DialogTab key={t} $w={w} $active={t === "边框"}>{t}</DialogTab>
          ))}
        </DialogTabs>
        <Panel>
          <PanelTop>
            <LineGroup>
              <GroupLegend>直线</GroupLegend>
              <FieldLabel $mt={9}>样式(<u>S</u>):</FieldLabel>
              <StyleList>
                <span>无</span>
                <LineSample w={2} d="3 2 8 2 3 2 3 2" />
                <LineSample d="1 1" />
                <LineSample w={2} d="9 1 4 1" />
                <LineSample d="2 2" />
                <LineSample w={2} d="5 3 10 3" />
                <LineSample d="4 3 8 3 3 3" />
                <LineSample w={2} d="9 3" />
                <LineSample d="7 3 3 3" />
                <LineSample w={2} />
                <LineSample d="3 1" />
                <LineSample w={3.5} />
                <SelectedLine><LineSample /></SelectedLine>
                <LineSample double />
              </StyleList>
              <FieldLabel $mt={17}>颜色(<u>C</u>):</FieldLabel>
              <ColorSelect>
                <ColorValue>自动</ColorValue>
                <ColorBtn><Chevron w={9} h={5} c="#444" /></ColorBtn>
              </ColorSelect>
            </LineGroup>
            <RightCol>
              <SectionTitle>预置</SectionTitle>
              <PresetRow>
                <PresetItem><PresetBtn><PresetIcon /></PresetBtn><PresetLabel>无(<u>N</u>)</PresetLabel></PresetItem>
                <PresetItem><PresetBtn><PresetIcon outer /></PresetBtn><PresetLabel>外边框(<u>O</u>)</PresetLabel></PresetItem>
                <PresetItem><PresetBtn><PresetIcon inner /></PresetBtn><PresetLabel>内部(<u>I</u>)</PresetLabel></PresetItem>
              </PresetRow>
              <SectionTitle $mt={10}>边框</SectionTitle>
              <Editor>
                <SideBtns>
                  <BorderBtn $on><SmallGrid /></BorderBtn>
                  <BorderBtn $on><SmallGrid /></BorderBtn>
                  <BorderBtn $on><SmallGrid /></BorderBtn>
                </SideBtns>
                <Preview>
                  <PreviewLines />
                  <PreviewText>文本</PreviewText>
                  <PreviewText>文本</PreviewText>
                  <PreviewTextLow>文本</PreviewTextLow>
                  <PreviewTextLow>文本</PreviewTextLow>
                </Preview>
                <span />
                <BorderBtn><SmallGrid solid="diagUp" /></BorderBtn>
                <RedBox>
                  <BorderBtn $w={19} $h={25}><SmallGrid /></BorderBtn>
                  <BorderBtn $w={21} $h={25}><SmallGrid solid="center" /></BorderBtn>
                  <LastBtn $w={21} $h={25}><SmallGrid solid="right" /></LastBtn>
                </RedBox>
                <BorderBtn><SmallGrid solid="diagDown" /></BorderBtn>
              </Editor>
            </RightCol>
          </PanelTop>
          <Description>单击预置选项、预览草图及上面的按钮可以添加边框样式。</Description>
        </Panel>
        <DialogFooter>
          <DialogBtn $default $w={73}>确定</DialogBtn>
          <DialogBtn $w={74}>取消</DialogBtn>
        </DialogFooter>
      </Dialog>

      <Overlay width="1602" height="1322" viewBox="0 0 1602 1322">
        <path d="M1038.800 409 1074 466 1073 472 1088 480 1085 463 1080 463z" fill="#ee3338" />
        <path d="M1322 697 1299 783 1304 784 1292 797 1289.500 781 1295 782z" fill="#ee3338" />
      </Overlay>
    </Page>
  );
}
